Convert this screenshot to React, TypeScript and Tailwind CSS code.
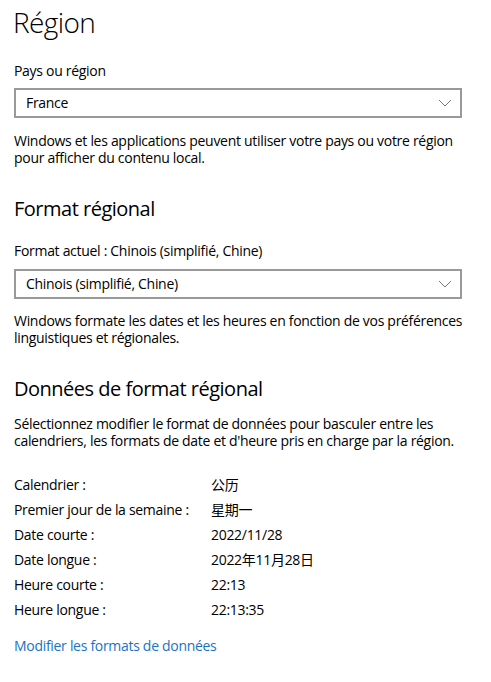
import React from 'react'

const rows: [string, string][] = [
  ['Calendrier :', '公历'],
  ['Premier jour de la semaine :', '星期一'],
  ['Date courte :', '2022/11/28'],
  ['Date longue :', '2022年11月28日'],
  ['Heure courte :', '22:13'],
  ['Heure longue :', '22:13:35'],
]

function Chevron() {
  return (
    <svg width="14" height="8" viewBox="0 0 14 8" fill="none">
      <path d="M1 1l6 6 6-6" stroke="#777" strokeWidth="1" />
    </svg>
  )
}

function Dropdown({ value }: { value: string }) {
  return (
    <div className="flex h-[30px] w-[448px] items-center justify-between border-2 border-[#999] pl-[10px] pr-[8px]">
      <span className="leading-[20px]">{value}</span>
      <Chevron />
    </div>
  )
}

export default function App() {
  return (
    <div
      className="min-h-[682px] w-[491px] bg-white px-[14px] text-[14px] tracking-[-0.3px] text-black"
      style={{ fontFamily: '"Open Sans", "Noto Sans CJK SC", sans-serif' }}
    >
      <h1 className="-ml-px pt-[2px] text-[28px] font-light leading-[40px] tracking-[-0.6px]">Région</h1>

      <div className="mt-[19px] leading-[20px]">Pays ou région</div>
      <div className="mt-[7px]">
        <Dropdown value="France" />
      </div>
      <p className="mt-[14px] leading-[17px]">
        Windows et les applications peuvent utiliser votre pays ou votre région pour afficher du contenu local.
      </p>

      <h2 className="mt-[29px] text-[20px] leading-[28px] tracking-[-0.5px]">Format régional</h2>
      <div className="mt-[18px] leading-[20px]">Format actuel : Chinois (simplifié, Chine)</div>
      <div className="mt-[8px]">
        <Dropdown value="Chinois (simplifié, Chine)" />
      </div>
      <p className="mt-[13px] leading-[17px]">
        Windows formate les dates et les heures en fonction de vos préférences linguistiques et régionales.
      </p>

      <h2 className="mt-[29px] text-[20px] leading-[28px] tracking-[-0.5px]">Données de format régional</h2>
      <p className="mt-[12px] leading-[17px]">
        Sélectionnez modifier le format de données pour basculer entre les calendriers, les formats de date et
        d'heure pris en charge par la région.
      </p>

      <div className="mt-[23px]">
        {rows.map(([k, v]) => (
          <div key={k} className="flex leading-[25px]">
            <span className="w-[197px]">{k}</span>
            <span>{v}</span>
          </div>
        ))}
      </div>

      <a href="#" className="mt-[14px] block leading-[20px] text-[#1a72c4]">
        Modifier les formats de données
      </a>
    </div>
  )
}
